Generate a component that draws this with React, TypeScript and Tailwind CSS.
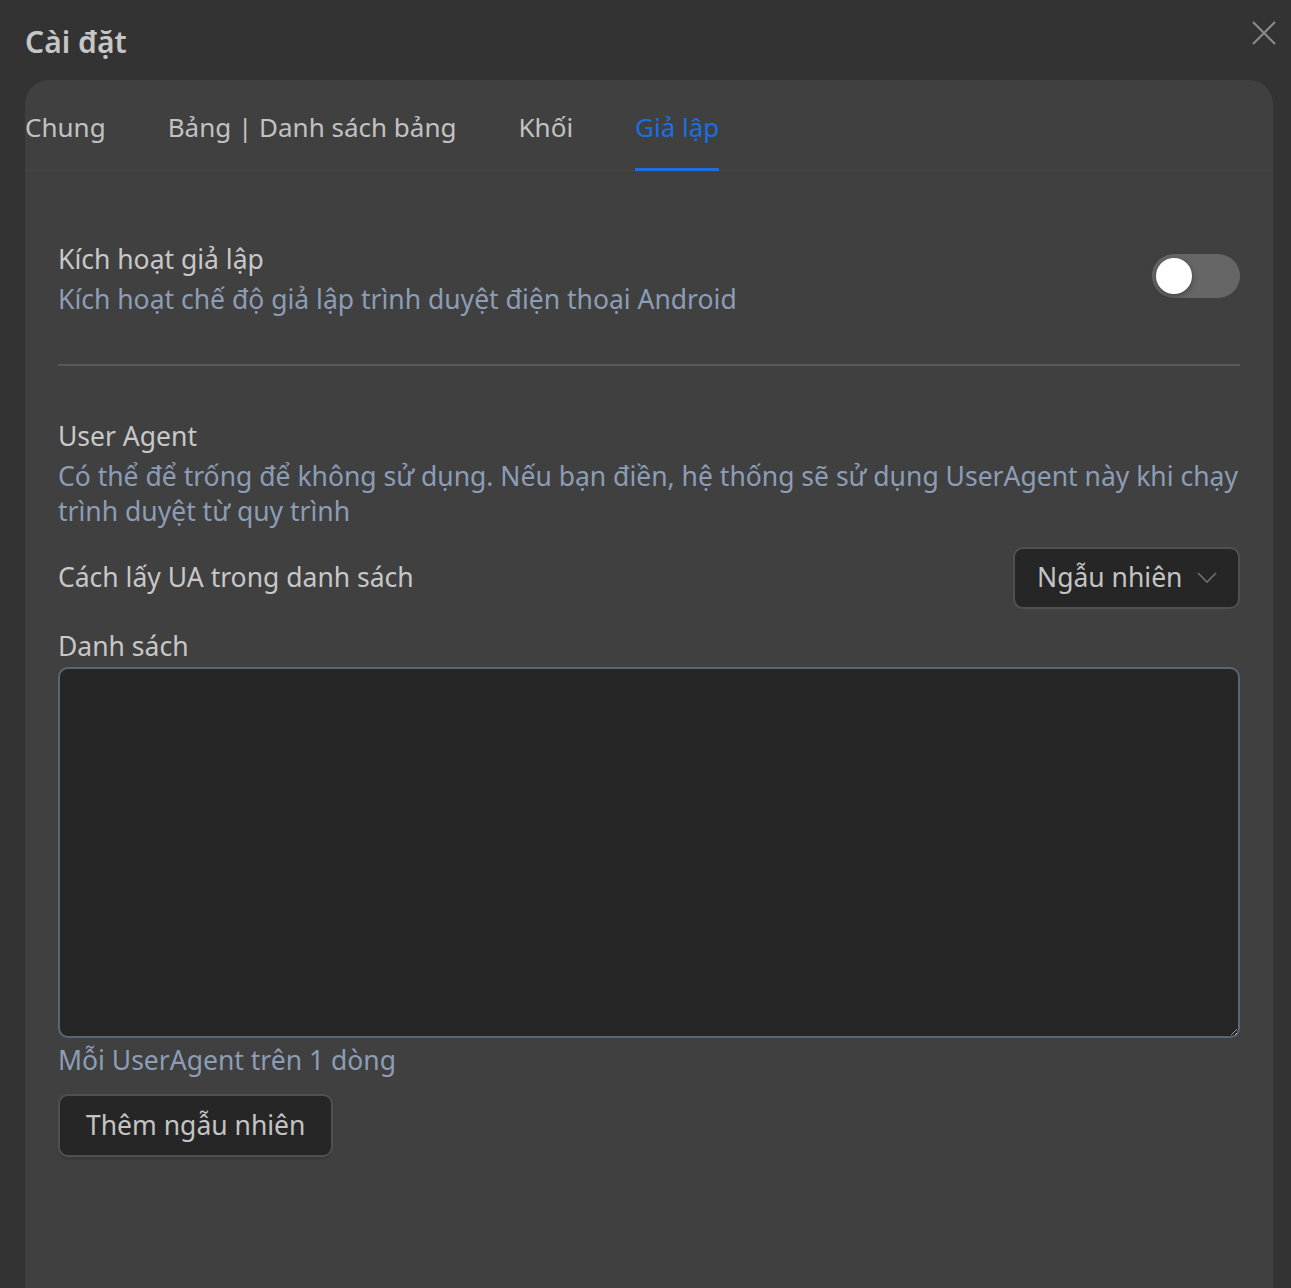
import React, { useState } from 'react';

const tabs = ['Chung', 'Bảng | Danh sách bảng', 'Khối', 'Giả lập'];

const App: React.FC = () => {
  const [enabled, setEnabled] = useState(false);
  const [mode] = useState('Ngẫu nhiên');
  const active = 3;

  return (
    <div
      className="min-h-[1288px] w-full bg-[#333333] flex flex-col text-[#c8c8c8]"
      style={{ fontFamily: '"Noto Sans", "Open Sans", sans-serif' }}
    >
      <div className="flex items-start justify-between pl-[25px] pr-[14px] pt-[20px] h-[80px]">
        <h1 className="text-[30px] font-semibold text-[#c6c6c6] leading-[44px]">Cài đặt</h1>
        <button className="text-[#8a8a8a]">
          <svg width="26" height="26" viewBox="0 0 26 26" fill="none" stroke="currentColor" strokeWidth="2.2">
            <path d="M2 2 L24 24 M24 2 L2 24" />
          </svg>
        </button>
      </div>

      <div className="ml-[25px] mr-[18px] flex-1 bg-[#404040] rounded-t-3xl flex flex-col">
        <div className="flex gap-[62px] h-[91px] border-b border-[#474747]">
          {tabs.map((t, i) => (
            <div
              key={t}
              className={
                'flex items-center pt-[7px] text-[26px] border-b-[3px] -mb-[1px] ' +
                (i === active
                  ? 'text-[#1b6fe0] border-[#1b6fe0]'
                  : 'text-[#c2c2c2] border-transparent')
              }
            >
              {t}
            </div>
          ))}
        </div>

        <div className="px-[33px] pt-[70px]">
          <div className="flex items-start justify-between pb-[43px] border-b-2 border-[#575757]">
            <div className="flex flex-col">
              <span className="text-[26.5px] leading-[36px] text-[#c8c8c8]">Kích hoạt giả lập</span>
              <span className="text-[26.5px] leading-[44px] text-[#8d9db6]">
                Kích hoạt chế độ giả lập trình duyệt điện thoại Android
              </span>
            </div>
            <button
              onClick={() => setEnabled(!enabled)}
              className={
                'mt-[13px] w-[88px] h-[44px] rounded-full flex items-center px-[4px] ' +
                (enabled ? 'bg-[#1b6fe0] justify-end' : 'bg-[#666666] justify-start')
              }
            >
              <span className="w-[36px] h-[36px] rounded-full bg-white shadow-[0_2px_6px_rgba(0,0,0,0.35)]" />
            </button>
          </div>

          <div className="pt-[52px] flex flex-col">
            <span className="text-[26.5px] leading-[36px]">User Agent</span>
            <p className="text-[26.5px] leading-[35px] text-[#8d9db6] mt-[5px]">
              Có thể để trống để không sử dụng. Nếu bạn điền, hệ thống sẽ sử dụng UserAgent này khi chạy trình
              duyệt từ quy trình
            </p>

            <div className="flex items-center justify-between mt-[18px]">
              <span className="text-[26.5px]">Cách lấy UA trong danh sách</span>
              <button className="h-[62px] w-[227px] rounded-[10px] bg-[#262626] border-2 border-[#505050] flex items-center pl-[22px] pr-[20px] justify-between text-[26.5px] text-[#c4c4c4]">
                {mode}
                <svg width="22" height="14" viewBox="0 0 22 14" fill="none" stroke="#6f6f6f" strokeWidth="1.6">
                  <path d="M2 2 L11 11 L20 2" />
                </svg>
              </button>
            </div>

            <span className="text-[26.5px] mt-[19px] leading-[36px]">Danh sách</span>
            <textarea className="mt-[3px] h-[371px] w-full rounded-[10px] bg-[#262626] border-2 border-[#59667a] outline-none p-3 text-[22px] text-[#c8c8c8]" />
            <span className="text-[26.5px] text-[#8d9db6] leading-[40px] mt-[2px]">Mỗi UserAgent trên 1 dòng</span>

            <div className="mt-[14px]">
              <button className="h-[63px] px-[26px] rounded-[10px] bg-[#262626] border-2 border-[#505050] text-[26.5px] text-[#c4c4c4] shadow-[0_3px_0_rgba(0,0,0,0.08)]">
                Thêm ngẫu nhiên
              </button>
            </div>
          </div>
        </div>
      </div>
    </div>
  );
};

export default App;
